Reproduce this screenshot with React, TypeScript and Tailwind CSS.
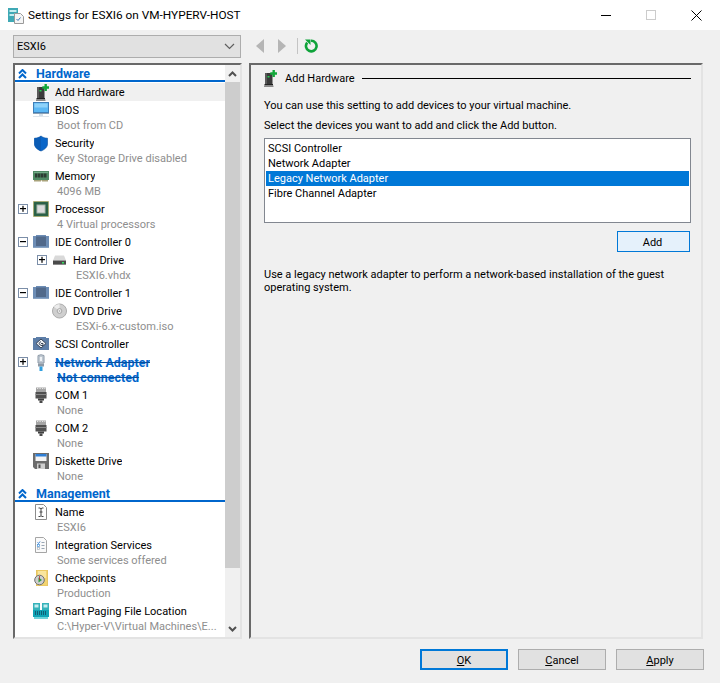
import React from "react";

const AddHw = () => (
  <svg width="13" height="17" viewBox="0 0 13 17" className="block">
    <rect x="1" y="3" width="7.500" height="11" fill="#3a3a3a" />
    <rect x="1" y="3" width="2" height="11" fill="#5a5a5a" />
    <rect x="0.500" y="14" width="8.500" height="1.500" fill="#222" />
    <rect x="0" y="15.500" width="9.500" height="1.500" fill="#8a8a8a" />
    <rect x="3.500" y="6" width="2" height="1.500" fill="#22d050" />
    <path d="M8.500 0h2.400v2.300H13v2.400h-2.100V7H8.500V4.700H6.300V2.300h2.200z" fill="#12a83a" />
  </svg>
);
const Bios = () => (
  <svg width="16" height="16" viewBox="0 0 16 16" className="block">
    <rect x="0.500" y="0.500" width="15" height="10" fill="#5cb8f4" stroke="#3f7fb8" />
    <rect x="1.500" y="1.500" width="13" height="4" fill="#8ed2fa" />
    <rect x="0" y="11" width="16" height="1" fill="#8aa0b4" />
    <rect x="6" y="12" width="4" height="2" fill="#d4dfe8" />
    <rect x="0" y="14" width="16" height="1" fill="#dfe6ec" />
  </svg>
);
const Shield = () => (
  <svg width="16" height="17" viewBox="0 0 16 17" className="block">
    <path d="M8 1c2 1.500 4 2.200 6.500 2.200V9c0 3.200-3 5.700-6.500 7-3.500-1.300-6.500-3.800-6.500-7V3.200C4 3.200 6 2.500 8 1z" fill="#0a66c8" stroke="#0a4f9c" strokeWidth="0.600" />
    <path d="M8 1c-2 1.500-4 2.200-6.500 2.200V9c0 3.200 3 5.700 6.500 7z" fill="#0b5cb5" />
  </svg>
);
const Memory = () => (
  <svg width="16" height="12" viewBox="0 0 16 12" className="block">
    <rect x="0" y="1" width="16" height="9" fill="#4f8a64" />
    <rect x="1" y="2" width="14" height="1" fill="#73ab88" />
    <rect x="2" y="3.500" width="2.500" height="4" fill="#2c3d33" />
    <rect x="5" y="3.500" width="2.500" height="4" fill="#2c3d33" />
    <rect x="8" y="3.500" width="2.500" height="4" fill="#2c3d33" />
    <rect x="11" y="3.500" width="2.500" height="4" fill="#2c3d33" />
    <path d="M1 10h14v1.500H9v-1H8v1H1z" fill="#a8a27a" />
  </svg>
);
const Cpu = () => (
  <svg width="16" height="16" viewBox="0 0 16 16" className="block">
    <rect x="0.500" y="0.500" width="15" height="15" fill="#2f6a4c" stroke="#b9a24a" strokeDasharray="1 1" />
    <rect x="1.500" y="1.500" width="13" height="13" fill="#2b5f45" />
    <rect x="4" y="4" width="8" height="8" fill="#dcdcdc" stroke="#a8b8ae" />
  </svg>
);
const Ide = () => (
  <svg width="16" height="14" viewBox="0 0 16 14" className="block">
    <path d="M0 1h3V0h10v1h3v12H0z" fill="#6d8db5" />
    <rect x="3" y="1.500" width="10" height="9.500" fill="#51698a" />
    <rect x="0" y="12" width="16" height="1" fill="#89a3c2" />
  </svg>
);
const Hdd = () => (
  <svg width="15" height="12" viewBox="0 0 15 12" className="block">
    <path d="M3 1.500h9l2 5H1z" fill="#d9d9d9" />
    <rect x="1" y="6.500" width="13" height="4.500" fill="#4a4a4a" />
    <rect x="10" y="8" width="2" height="1.500" fill="#35e060" />
    <rect x="1" y="10" width="13" height="1" fill="#8a8a8a" />
  </svg>
);
const Dvd = () => (
  <svg width="16" height="16" viewBox="0 0 16 16" className="block">
    <circle cx="8" cy="8" r="7.500" fill="#cfcfcf" stroke="#a8a8a8" />
    <path d="M8 8L2 3.500A7.500 7.500 0 0 1 8 .5z" fill="#ececec" />
    <circle cx="8" cy="8" r="2.500" fill="#f5f5f5" stroke="#a0a0a0" />
    <circle cx="8" cy="8" r="1" fill="#b5b5b5" />
  </svg>
);
const Scsi = () => (
  <svg width="16" height="14" viewBox="0 0 16 14" className="block">
    <path d="M0 1h3V0h10v1h3v12H0z" fill="#5d7ea8" />
    <path d="M8 2l5 4.500L8 11 3 6.500z" fill="#eef1f5" stroke="#39465a" />
    <path d="M8 4.500L5.800 6.500 8 8.500h2V6.500H8" fill="none" stroke="#39465a" />
  </svg>
);
const Net = () => (
  <svg width="10" height="17" viewBox="0 0 10 17" className="block">
    <path d="M2 1.500q3-1.500 6 0V9H2z" fill="#c9d2dc" stroke="#8d99a6" />
    <rect x="3.500" y="2.500" width="3" height="5" fill="#eef2f6" stroke="#a5afba" strokeWidth="0.500" />
    <rect x="2" y="9.500" width="6" height="3" fill="#8d99a6" />
    <rect x="3.500" y="12.500" width="3" height="4.500" fill="#2f9fe0" />
  </svg>
);
const Com = () => (
  <svg width="12" height="16" viewBox="0 0 12 16" className="block">
    <rect x="1" y="0.500" width="10" height="5" fill="#a5a5a5" />
    <path d="M2 1.500h1.200M4.500 1.500h1.200M7 1.500h1.200M9.300 1.500h1" stroke="#e6e6e6" />
    <rect x="0.500" y="5" width="11" height="6.500" fill="#505050" />
    <rect x="0.500" y="7" width="11" height="1" fill="#8a8a8a" />
    <rect x="3" y="11.500" width="6" height="2" fill="#3f3f3f" />
    <rect x="4.500" y="13.500" width="3" height="2.500" fill="#4a4a4a" />
  </svg>
);
const Floppy = () => (
  <svg width="16" height="16" viewBox="0 0 16 16" className="block">
    <path d="M0 0h16v16H2l-2-2z" fill="#6c6c6c" />
    <rect x="2.500" y="1" width="11" height="7" fill="#f4f4f4" />
    <rect x="2.500" y="1" width="11" height="2.500" fill="#2f7fd6" />
    <rect x="4" y="10.500" width="8" height="5.500" fill="#cfcfcf" />
    <rect x="5.500" y="11.500" width="2" height="3.500" fill="#555" />
  </svg>
);
const NameIcon = () => (
  <svg width="12" height="16" viewBox="0 0 12 16" className="block">
    <path d="M.5.500h8l3 3v12H.5z" fill="#fff" stroke="#8c8c8c" />
    <path d="M3.500 4h1.500l1 .800L7 4h1.500M6 5v6.500M3.500 12.500H5l1-.800 1 .800h1.500M4.500 8h3" fill="none" stroke="#444" />
  </svg>
);
const Services = () => (
  <svg width="12" height="16" viewBox="0 0 12 16" className="block">
    <path d="M.5.500h8l3 3v12H.5z" fill="#fafafa" stroke="#a5a5a5" />
    <path d="M2.500 5.500l1 1 1.500-2" fill="none" stroke="#2f7fd6" />
    <path d="M6.500 5.500h3M6.500 8.500h3M6.500 11.500h3" stroke="#9aa7b5" />
    <rect x="2.500" y="7.500" width="2" height="2" fill="#fff" stroke="#3f8fd8" strokeWidth="0.700" />
    <rect x="2.500" y="10.500" width="2" height="2" fill="#fff" stroke="#aab4be" strokeWidth="0.700" />
  </svg>
);
const Checkpoint = () => (
  <svg width="14" height="16" viewBox="0 0 14 16" className="block">
    <rect x="2.500" y="0" width="11" height="16" fill="#f2d36f" stroke="#e0bb50" strokeWidth="0.800" />
    <rect x="4" y="1" width="8" height="7" fill="#f9e59d" />
    <circle cx="5.500" cy="10" r="4.800" fill="#cfcfcf" stroke="#6f6f6f" />
    <path d="M4.500 7.500L8 10l-3.500 2.500z" fill="#2f9f3f" />
    <path d="M5.500 10V6" stroke="#b0352f" strokeWidth="0.800" />
  </svg>
);
const Paging = () => (
  <svg width="16" height="16" viewBox="0 0 16 16" className="block">
    <rect x="0" y="0" width="7" height="7" fill="#35b3bb" />
    <rect x="9" y="0" width="7" height="7" fill="#35b3bb" />
    <rect x="1.500" y="1.500" width="4" height="3" fill="#c7edf0" />
    <rect x="10.500" y="1.500" width="4" height="3" fill="#c7edf0" />
    <rect x="0" y="7" width="16" height="7" fill="#0fa3b5" />
    <path d="M2 9h12M2 11h12" stroke="#124a62" strokeDasharray="1 1" strokeWidth="1.500" />
    <rect x="1" y="14" width="14" height="2" fill="#6fd3da" />
  </svg>
);
const Teal = () => (
  <svg width="16" height="16" viewBox="0 0 16 16" className="block">
    <path d="M2 5q6-6 12 0v11H2z" fill="#35b3bb" />
  </svg>
);

const Exp = ({ minus }: { minus?: boolean }) => (
  <span className="flex h-[10px] w-[10px] items-center justify-center border border-[#7b8ea8] bg-white">
    <svg width="8" height="8" viewBox="0 0 8 8" className="block">
      <rect x="1" y="3" width="6" height="1.200" fill="#000" />
      {!minus && <rect x="3.400" y="0.800" width="1.200" height="6" fill="#000" />}
    </svg>
  </span>
);

const Chevrons = () => (
  <svg width="9" height="10" viewBox="0 0 9 10" className="block">
    <path d="M1 4.500l3.500-3.500 3.500 3.500M1 9l3.500-3.500L8 9" fill="none" stroke="#0066cc" strokeWidth="2" />
  </svg>
);

type RowProps = {
  icon: React.ReactNode;
  label: string;
  sub?: string;
  nested?: boolean;
  exp?: "plus" | "minus";
  active?: boolean;
  warn?: boolean;
};

const Row = ({ icon, label, sub, nested, exp, active, warn }: RowProps) => {
  const tone = warn ? "text-[12.500px] font-bold text-[#0066cc] line-through decoration-[#0a4f9c]" : "text-black";
  return (
    <div>
      <div className={`flex h-[18px] items-center ${nested ? "pl-[22px]" : "pl-[3px]"} ${active ? "bg-[#f0f0f0]" : ""}`}>
        <span className="flex w-[15px] shrink-0 items-center">{exp && <Exp minus={exp === "minus"} />}</span>
        <span className={`flex h-[18px] shrink-0 items-center justify-center ${nested ? "w-[15px] mr-[6px]" : "w-[16px] mr-[6px]"}`}>{icon}</span>
        <span className={`truncate ${tone}`}>{label}</span>
      </div>
      {sub && (
        <div className={`h-[15px] truncate leading-[13px] ${nested ? "pl-[61px]" : "pl-[42px]"} ${warn ? tone : "text-[#8e8e8e]"}`}>{sub}</div>
      )}
    </div>
  );
};

const Section = ({ label }: { label: string }) => (
  <div className="h-[18px]">
    <div className="flex h-[17px] items-center border-b-2 border-[#0066cc] pl-[3px] pt-[2px] text-[12.500px] font-bold text-[#0066cc]">
      <span className="w-[18px] shrink-0"><Chevrons /></span>
      {label}
    </div>
  </div>
);

const FootBtn = ({ k, rest, primary }: { k: string; rest: string; primary?: boolean }) => (
  <button className={`h-[21px] w-[88px] bg-[#e1e1e1] pt-[2px] leading-[15px] text-black ${primary ? "border-2 border-[#0078d7]" : "border border-[#adadad]"}`}>
    <u>{k}</u>{rest}
  </button>
);

export default function App() {
  return (
    <div className="flex h-[683px] w-[720px] flex-col overflow-hidden bg-[#f0f0f0] text-[11px] leading-[15px] text-black [font-family:Roboto,sans-serif]">
      <div className="flex h-[30px] shrink-0 items-center bg-white pl-[8px] text-[11.800px]">
        <svg width="16" height="17" viewBox="0 0 16 17" className="mr-[4px] block shrink-0">
          <rect x="0" y="1" width="10" height="14" fill="#3fa9b5" />
          <rect x="1.500" y="3" width="7" height="2" fill="#c7edf0" />
          <rect x="1.500" y="7" width="7" height="2" fill="#c7edf0" />
          <path d="M6.500 6.500h6l3 3v7h-9z" fill="#f5f5f5" stroke="#9a9a9a" />
          <path d="M8.500 12l1.500 1.500 2.500-3" fill="none" stroke="#3a78b5" />
        </svg>
        <span>Settings for ESXI6 on VM-HYPERV-HOST</span>
        <div className="ml-auto flex items-center pr-[18px]">
          <span className="h-px w-[10px] bg-black" />
          <span className="ml-[35px] h-[10px] w-[10px] border border-[#cccccc]" />
          <svg width="11" height="11" viewBox="0 0 11 11" className="ml-[35px] block">
            <path d="M.5.500l10 10M10.500.500l-10 10" stroke="#000" strokeWidth="1" />
          </svg>
        </div>
      </div>

      <div className="flex flex-1 flex-col pl-[13px]">
        <div className="mt-[5px] flex h-[23px] items-center">
          <div className="flex h-[23px] w-[228px] items-center justify-between border border-[#adadad] bg-[#e1e1e1] pl-[3px] pr-[5px]">
            <span>ESXI6</span>
            <svg width="11" height="7" viewBox="0 0 11 7" className="block">
              <path d="M1 1l4.500 4.500L10 1" fill="none" stroke="#5f5f5f" strokeWidth="1.200" />
            </svg>
          </div>
          <svg width="10" height="14" viewBox="0 0 10 14" className="mb-[2px] ml-[14px] block">
            <path d="M9 0v14L1 7z" fill="#b5b5b5" />
          </svg>
          <svg width="10" height="14" viewBox="0 0 10 14" className="mb-[2px] ml-[12px] block">
            <path d="M1 0v14l8-7z" fill="#b5b5b5" />
          </svg>
          <span className="mb-[2px] ml-[10px] h-[16px] w-px bg-[#c4c4c4]" />
          <svg width="14" height="14" viewBox="0 0 14 14" className="mb-[2px] ml-[6px] block">
            <path d="M3.200 3.600A5.300 5.300 0 1 0 7 1.700" fill="none" stroke="#0fa33a" strokeWidth="2.600" />
            <path d="M1 .500h5.500V6z" fill="#0fa33a" />
          </svg>
        </div>

        <div className="mt-[5px] flex gap-[7px]">
          <div className="flex h-[576px] w-[229px] shrink-0 border-2 border-b-[#e3e3e3] border-l-[#696969] border-r-[#e3e3e3] border-t-[#696969] bg-white">
            <div className="min-w-0 flex-1 overflow-hidden">
              <Section label="Hardware" />
              <Row icon={<span className="ml-[3px]"><AddHw /></span>} label="Add Hardware" active />
              <Row icon={<Bios />} label="BIOS" sub="Boot from CD" />
              <Row icon={<Shield />} label="Security" sub="Key Storage Drive disabled" />
              <Row icon={<Memory />} label="Memory" sub="4096 MB" />
              <Row icon={<Cpu />} label="Processor" sub="4 Virtual processors" exp="plus" />
              <Row icon={<Ide />} label="IDE Controller 0" exp="minus" />
              <Row icon={<Hdd />} label="Hard Drive" sub="ESXI6.vhdx" nested exp="plus" />
              <Row icon={<Ide />} label="IDE Controller 1" exp="minus" />
              <Row icon={<Dvd />} label="DVD Drive" sub="ESXi-6.x-custom.iso" nested />
              <Row icon={<Scsi />} label="SCSI Controller" />
              <Row icon={<Net />} label="Network Adapter" sub="Not connected" exp="plus" warn />
              <Row icon={<Com />} label="COM 1" sub="None" />
              <Row icon={<Com />} label="COM 2" sub="None" />
              <Row icon={<Floppy />} label="Diskette Drive" sub="None" />
              <Section label="Management" />
              <Row icon={<NameIcon />} label="Name" sub="ESXI6" />
              <Row icon={<Services />} label="Integration Services" sub="Some services offered" />
              <Row icon={<Checkpoint />} label="Checkpoints" sub="Production" />
              <Row icon={<Paging />} label="Smart Paging File Location" sub="C:\Hyper-V\Virtual Machines\E..." />
              <Row icon={<Teal />} label="" />
            </div>
            <div className="flex w-[15px] shrink-0 flex-col bg-[#f0f0f0]">
              <div className="flex h-[17px] items-center justify-center">
                <svg width="9" height="6" viewBox="0 0 9 6" className="block">
                  <path d="M1 5l3.500-3.500L8 5" fill="none" stroke="#505050" strokeWidth="2" />
                </svg>
              </div>
              <div className="h-[486px] bg-[#cdcdcd]" />
              <div className="mt-auto flex h-[17px] items-center justify-center">
                <svg width="9" height="6" viewBox="0 0 9 6" className="block">
                  <path d="M1 1l3.500 3.500L8 1" fill="none" stroke="#505050" strokeWidth="2" />
                </svg>
              </div>
            </div>
          </div>

          <div className="h-[576px] w-[454px] shrink-0 border-2 border-b-[#e3e3e3] border-l-[#696969] border-r-[#e3e3e3] border-t-[#696969] pl-[13px] pr-[10px]">
            <div className="mt-[4px] flex h-[18px] items-center">
              <span className="w-[21px] shrink-0"><AddHw /></span>
              <span>Add Hardware</span>
              <span className="ml-[7px] h-px flex-1 bg-black" />
            </div>
            <p className="mt-[11px]">You can use this setting to add devices to your virtual machine.</p>
            <p className="mt-[5px]">Select the devices you want to add and click the Add button.</p>
            <div className="mt-[5px] h-[85px] border border-[#828790] bg-white px-px pt-[2px]">
              <div className="h-[15px] pl-[2px]">SCSI Controller</div>
              <div className="h-[15px] pl-[2px]">Network Adapter</div>
              <div className="h-[15px] bg-[#0078d7] pl-[2px] text-white">Legacy Network Adapter</div>
              <div className="h-[15px] pl-[2px]">Fibre Channel Adapter</div>
            </div>
            <div className="mt-[8px] flex justify-end pr-px">
              <button className="h-[21px] w-[73px] border border-[#0078d7] bg-[#e5f1fb] pr-[2px] pt-[2px] leading-[15px]">Add</button>
            </div>
            <p className="mt-[16px] leading-[13px]">Use a legacy network adapter to perform a network-based installation of the guest operating system.</p>
          </div>
        </div>

        <div className="mt-[10px] flex justify-end gap-[10px] pr-[16px]">
          <FootBtn k="O" rest="K" primary />
          <FootBtn k="C" rest="ancel" />
          <FootBtn k="A" rest="pply" />
        </div>
      </div>
    </div>
  );
}
